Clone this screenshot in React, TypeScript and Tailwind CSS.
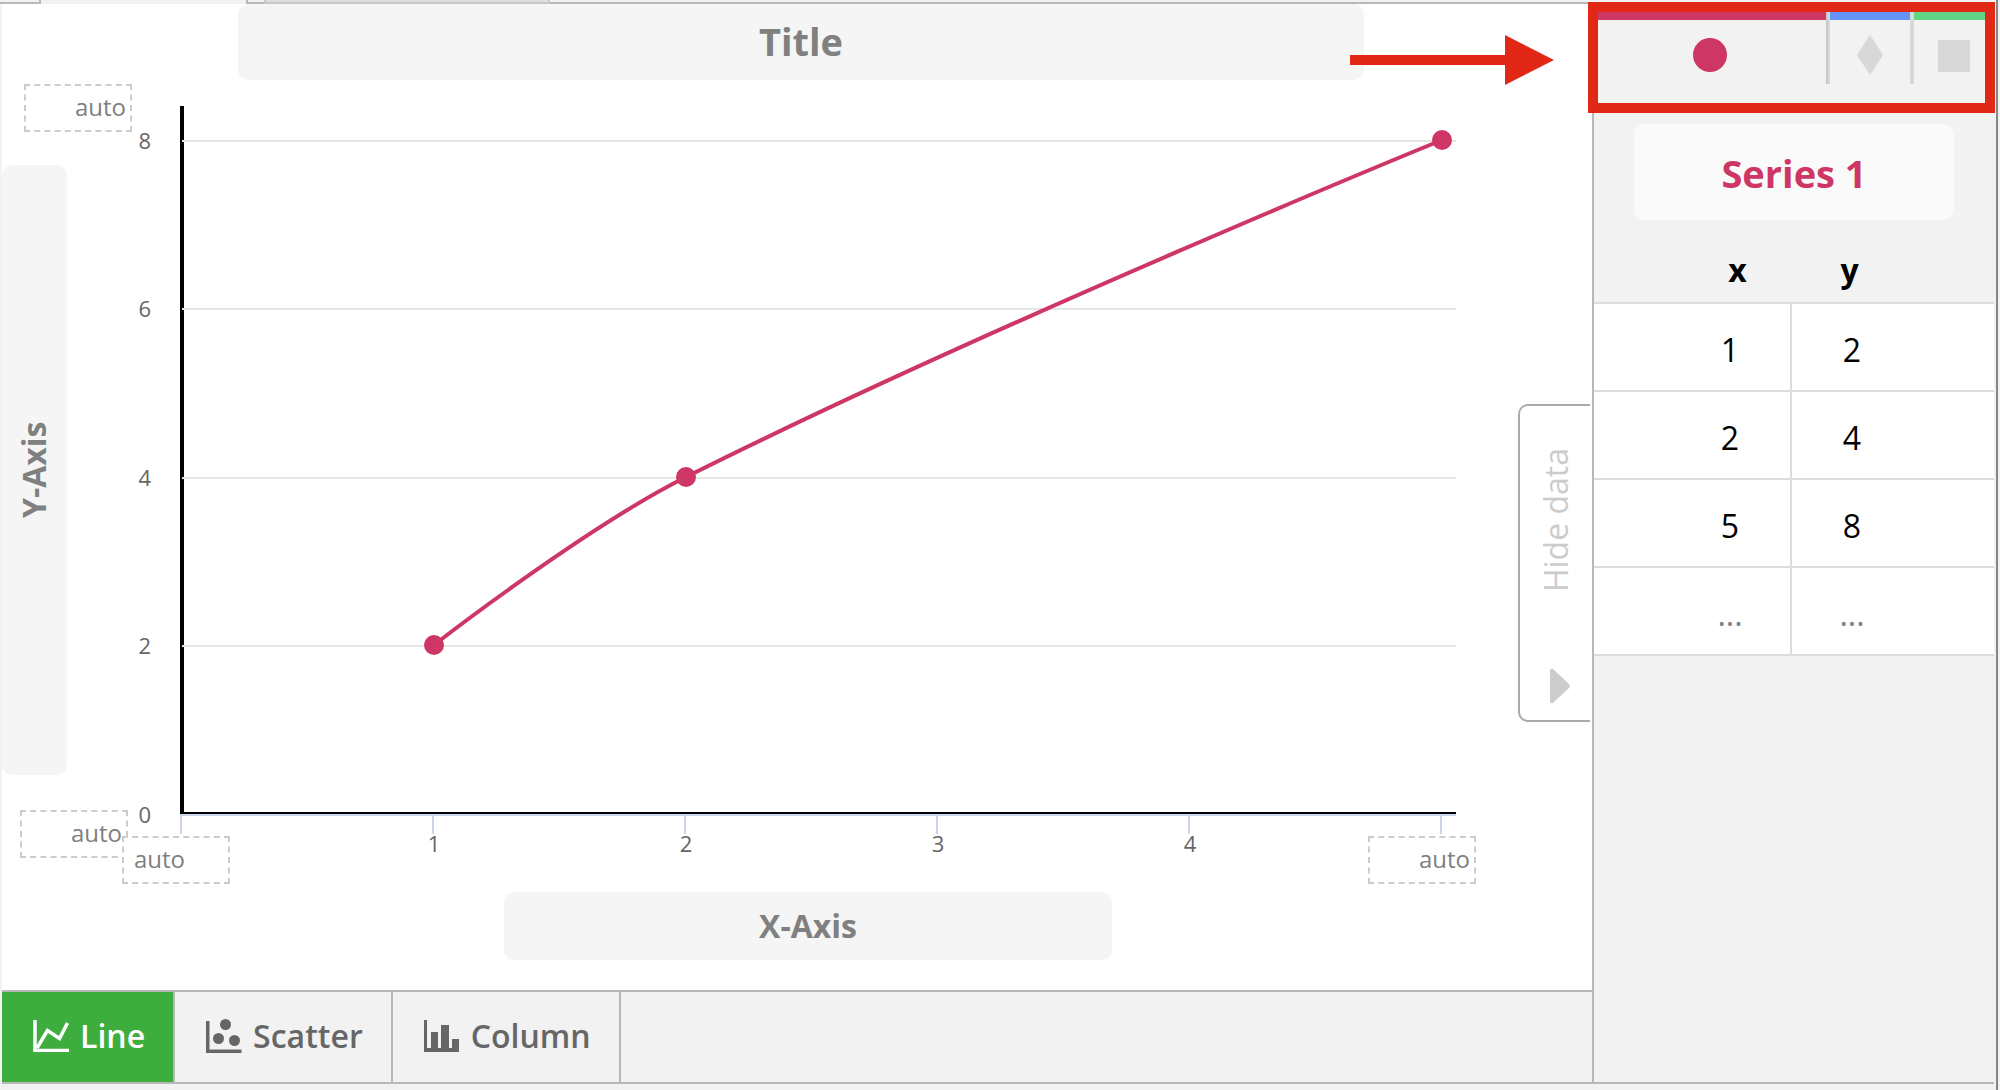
import React from "react";

interface Point {
  x: number;
  y: number;
}

const points: Point[] = [
  { x: 1, y: 2 },
  { x: 2, y: 4 },
  { x: 5, y: 8 },
];

const rows = [...points.map((p) => [String(p.x), String(p.y)]), ["", ""]];

// plot geometry, in svg units
const ORIGIN_X = 115;
const ORIGIN_Y = 734;
const toX = (x: number) => Math.round(ORIGIN_X + x * 252);
const toY = (y: number) => Math.round(ORIGIN_Y - y * 84.3);

// same smoothing as the highcharts spline
const splinePath = (data: Point[]) => {
  const pts = data.map((p) => ({ x: toX(p.x), y: toY(p.y) }));
  let out = `M ${pts[0].x} ${pts[0].y}`;
  let ctrl = pts[0];
  for (let i = 1; i < pts.length; i++) {
    const cur = pts[i];
    const prev = pts[i - 1];
    const next = pts[i + 1];
    let left = cur;
    let right = cur;
    if (next) {
      left = { x: (1.5 * cur.x + prev.x) / 2.5, y: (1.5 * cur.y + prev.y) / 2.5 };
      right = { x: (1.5 * cur.x + next.x) / 2.5, y: (1.5 * cur.y + next.y) / 2.5 };
      const fix =
        ((right.y - left.y) * (right.x - cur.x)) / (right.x - left.x) +
        cur.y -
        right.y;
      left.y += fix;
      right.y += fix;
    }
    out += ` C ${ctrl.x} ${ctrl.y} ${left.x} ${left.y} ${cur.x} ${cur.y}`;
    ctrl = right;
  }
  return out;
};

const Chart: React.FC = () => {
  return (
    <svg
      viewBox="0 0 1451 812"
      className="block w-full"
      fontFamily='"Open Sans", sans-serif'
      fontSize="22"
      fill="#666666"
    >
      <rect x="113" y="26" width="4" height="708" fill="#000" />
      {[2, 4, 6, 8].map((v) => (
        <rect key={v} x="115" y={toY(v)} width="1274" height="2" fill="#e6e6e6" />
      ))}
      {[0, 2, 4, 6, 8].map((v) => (
        <text key={v} x="84" y={toY(v) + 9} textAnchor="end">
          {v}
        </text>
      ))}
      <rect x="113" y="734" width="1276" height="2" fill="#ccd6eb" />
      {[0, 1, 2, 3, 4, 5].map((v) => (
        <rect key={v} x={toX(v) - 2} y="736" width="2" height="18" fill="#ccd6eb" />
      ))}
      {[1, 2, 3, 4].map((v) => (
        <text key={v} x={toX(v)} y="772" textAnchor="middle">
          {v}
        </text>
      ))}
      <rect x="113" y="732" width="1276" height="2" fill="#000" />
      <path d={splinePath(points)} fill="none" stroke="#ce3665" strokeWidth="4" />
      {points.map((p) => (
        <circle key={p.x} cx={toX(p.x)} cy={toY(p.y)} r="10" fill="#ce3665" />
      ))}
    </svg>
  );
};

const LineIcon = () => (
  <svg viewBox="0 0 36 32" className="h-8 w-9" fill="none" stroke="currentColor">
    <path d="M2 0V30.5H36" strokeWidth="3.5" />
    <path d="M4 28L14.5 10.5L26.5 18.5L34.5 3" strokeWidth="3.5" />
  </svg>
);

const ScatterIcon = () => (
  <svg viewBox="0 0 36 34" className="h-[34px] w-9" fill="currentColor">
    <path d="M0 2H3.5V30.5H35.5V34H0Z" />
    <circle cx="19.5" cy="5.5" r="5.5" />
    <circle cx="12.5" cy="19.5" r="5.5" />
    <circle cx="28.5" cy="21.5" r="5.5" />
  </svg>
);

const ColumnIcon = () => (
  <svg viewBox="0 0 36 32" className="h-8 w-9" fill="currentColor">
    <path d="M0 0H3V28H7V12H14V28H17V5H25V28H28V19H35V32H0Z" />
  </svg>
);

const chartTypes = [
  { label: "Line", Icon: LineIcon, className: "bg-[#3dae3d] text-white" },
  { label: "Scatter", Icon: ScatterIcon, className: "" },
  { label: "Column", Icon: ColumnIcon, className: "" },
];

const bounds = [
  { label: "Y axis maximum", className: "left-[22px] top-1 pr-1 text-right" },
  { label: "Y axis minimum", className: "left-[18px] top-[730px] pr-1 text-right" },
  { label: "X axis minimum", className: "left-[120px] top-[756px] pl-[10px]" },
  { label: "X axis maximum", className: "left-[1366px] top-[756px] pr-1 text-right" },
];

const App: React.FC = () => {
  return (
    <div className="flex min-h-screen bg-[#f2f2f2] pr-[2px] font-['Open_Sans',sans-serif]">
      <div className="flex min-w-0 flex-1 flex-col border-r-2 border-[#868686] pr-[2px]">
        {/* bottom edge of the page tabs */}
        <div className="flex h-1">
          <div className="w-[41px] border-b-2 border-r-2 border-[#b8b8b8]" />
          <div className="w-[205px]" />
          <div className="w-[18px] border-b-2 border-l-2 border-[#b8b8b8]" />
          <div className="w-[286px] border-x-2 border-b-2 border-[#c8c8c8] bg-[#dddddd]" />
          <div className="flex-1 border-b-2 border-[#b8b8b8]" />
        </div>

        <div className="ml-[2px] flex flex-1 border-b-2 border-[#b8b8b8]">
          <main className="flex min-w-0 flex-1 flex-col bg-white">
            <div className="flex pl-[236px] pr-[228px]">
              <input
                aria-label="Chart title"
                placeholder="Title"
                className="h-[76px] w-full rounded-[10px] bg-[#f5f5f5] pb-[2px] text-center text-[38px] font-bold placeholder:text-[#808080]"
              />
            </div>

            <div className="relative flex items-start">
              <input
                aria-label="Y axis title"
                placeholder="Y-Axis"
                className="mt-[85px] h-[610px] w-[65px] rotate-180 rounded-[10px] bg-[#f5f5f5] pl-[2px] text-center text-[32px] font-bold [writing-mode:vertical-rl] placeholder:text-[#808080]"
              />
              <div className="min-w-0 flex-1">
                <Chart />
              </div>
              <button
                type="button"
                className="mr-[2px] mt-[324px] flex h-[318px] w-[72px] flex-col items-center rounded-l-[10px] border-2 border-r-0 border-[#aaaaaa] pl-[2px] pt-[42px] text-[32px] text-[#cccccc]"
              >
                <span className="rotate-180 whitespace-nowrap [writing-mode:vertical-rl]">
                  Hide data
                </span>
                <svg viewBox="0 0 20 36" className="mt-auto mb-4 ml-2 h-9 w-5" fill="currentColor">
                  <path d="M0 3Q0 0 3 1L19 16Q20.5 18 19 20L3 35Q0 36 0 33Z" />
                </svg>
              </button>

              {bounds.map((b) => (
                <input
                  key={b.label}
                  aria-label={b.label}
                  placeholder="auto"
                  className={`absolute h-12 w-[108px] border-2 border-dashed border-[#cccccc] bg-white pb-1 text-2xl placeholder:text-[#808080] ${b.className}`}
                />
              ))}
            </div>

            <div className="flex pl-[502px] pr-[480px]">
              <input
                aria-label="X axis title"
                placeholder="X-Axis"
                className="h-[68px] w-full rounded-[10px] bg-[#f5f5f5] pb-[2px] text-center text-[32px] font-bold placeholder:text-[#808080]"
              />
            </div>

            <div className="mt-auto flex h-[92px] border-t-2 border-[#b8b8b8] bg-[#f2f2f2] text-[32px] font-semibold text-[#666666]">
              {chartTypes.map(({ label, Icon, className }) => (
                <button
                  key={label}
                  type="button"
                  className={`flex items-center gap-[11px] border-r-2 border-[#b8b8b8] pb-[2px] pl-[31px] pr-7 ${className}`}
                >
                  <Icon />
                  {label}
                </button>
              ))}
            </div>
          </main>

          <aside className="relative w-[402px] shrink-0 border-l-2 border-[#b8b8b8]">
            <div className="flex h-20">
              <button
                type="button"
                aria-label="Series 1"
                className="flex flex-1 items-center justify-center border-t-16 border-[#ce3665] pt-[5px]"
              >
                <svg viewBox="0 0 34 34" className="size-[34px]" fill="#ce3665">
                  <circle cx="17" cy="17" r="17" />
                </svg>
              </button>
              <div className="w-1 border-l-2 border-[#c8c8c8] bg-[#d8d8d8]" />
              <button
                type="button"
                aria-label="Series 2"
                className="flex w-20 items-center justify-center border-t-16 border-[#6694f6] pt-[5px]"
              >
                <svg viewBox="0 0 26 40" className="h-10 w-[26px]" fill="#d8d8d8">
                  <path d="M13 0L26 20L13 40L0 20Z" />
                </svg>
              </button>
              <div className="w-1 bg-[#d8d8d8]" />
              <button
                type="button"
                aria-label="Series 3"
                className="flex w-20 items-center justify-center border-t-16 border-[#5fd585] pt-2"
              >
                <svg viewBox="0 0 32 32" className="size-8" fill="#d8d8d8">
                  <rect width="32" height="32" />
                </svg>
              </button>
            </div>

            <div className="px-10 pt-10">
              <input
                aria-label="Series name"
                defaultValue="Series 1"
                className="h-24 w-full rounded-[10px] bg-[#fafafa] pt-[2px] text-center text-[38px] font-bold text-[#ce3665]"
              />
            </div>

            <table className="w-full table-fixed text-[32px] leading-[44px]">
              <thead>
                <tr className="h-[83px] border-b-2 border-[#dddddd]">
                  <th className="w-[197px] pl-[90px] pt-[18px] font-bold">x</th>
                  <th className="pr-[86px] pt-[18px] font-bold">y</th>
                </tr>
              </thead>
              <tbody className="bg-white">
                {rows.map(([x, y], index) => (
                  <tr key={index} className="h-[88px] border-b-2 border-[#dddddd]">
                    <td className="border-r-2 border-[#dddddd] pl-[76px] pt-[6px]">
                      <input
                        aria-label={`x ${index + 1}`}
                        defaultValue={x}
                        placeholder="..."
                        className="block w-full text-center placeholder:text-[#808080]"
                      />
                    </td>
                    <td className="pr-[82px] pt-[6px]">
                      <input
                        aria-label={`y ${index + 1}`}
                        defaultValue={y}
                        placeholder="..."
                        className="block w-full text-center placeholder:text-[#808080]"
                      />
                    </td>
                  </tr>
                ))}
              </tbody>
            </table>

            {/* callout around the series tabs */}
            <div className="pointer-events-none absolute -left-[6px] -top-[2px] h-[111px] w-[407px] border-10 border-[#e12817]" />
            <svg
              viewBox="0 0 204 50"
              className="pointer-events-none absolute -left-[244px] top-[31px] h-[50px] w-[204px]"
              fill="#e12817"
            >
              <path d="M0 20H155V0L204 25L155 50V30H0Z" />
            </svg>
          </aside>
        </div>
        <div className="h-[6px]" />
      </div>
    </div>
  );
};

export default App;
